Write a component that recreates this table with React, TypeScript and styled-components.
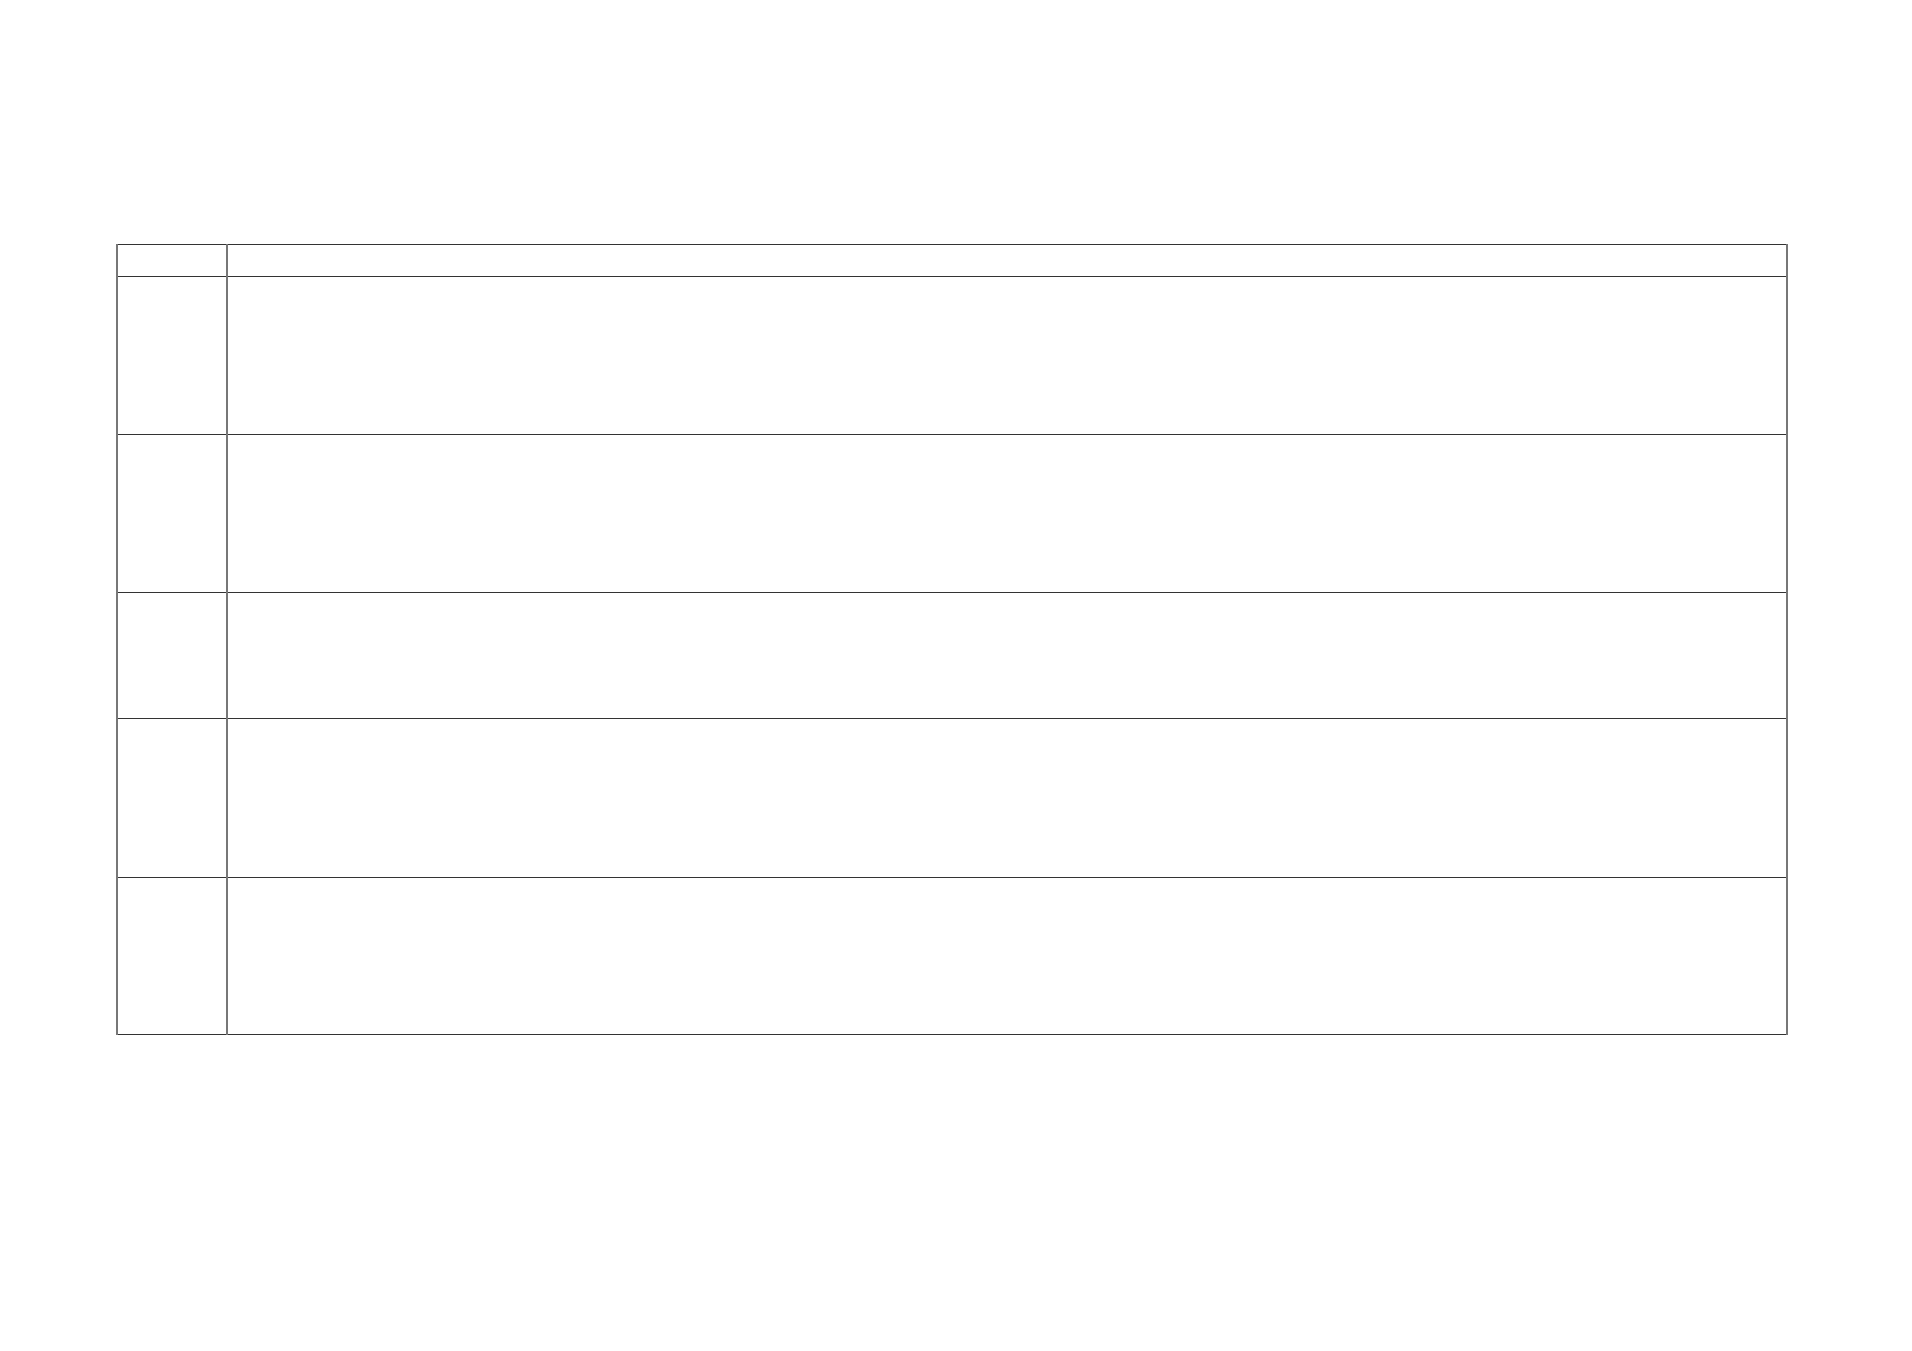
import React from 'react';
import styled, { createGlobalStyle } from 'styled-components';

const GlobalStyles = createGlobalStyle`
    html, body{
        margin: 0;
        padding: 0;
        background-color: #fff;
        font-family: "Liberation Sans", Arial, sans-serif;
    }
`

const Page = styled.div`
    width: 100%;
    min-height: 1351px;
    padding: 244px 0 0 116px;
    box-sizing: border-box;
`

const Grid = styled.table`
    border-collapse: collapse;
    table-layout: fixed;
    width: 1672px;

    td{
        border-top: 1px solid #333;
        border-bottom: 1px solid #333;
        border-left: 2px solid #777;
        border-right: 2px solid #777;
        padding: 0;
    }
`

const Row = styled.tr<{ $h: number }>`
    height: ${p => p.$h}px;
`

const LabelCell = styled.td`
    width: 108px;
`

const BodyCell = styled.td``

const rows = [32, 158, 158, 126, 159, 157];

export default function App(){
    return(
        <Page>
            <GlobalStyles />
            <Grid>
                <tbody>
                    {rows.map((h, i) => (
                        <Row key={i} $h={h}>
                            <LabelCell />
                            <BodyCell />
                        </Row>
                    ))}
                </tbody>
            </Grid>
        </Page>
    )
}
